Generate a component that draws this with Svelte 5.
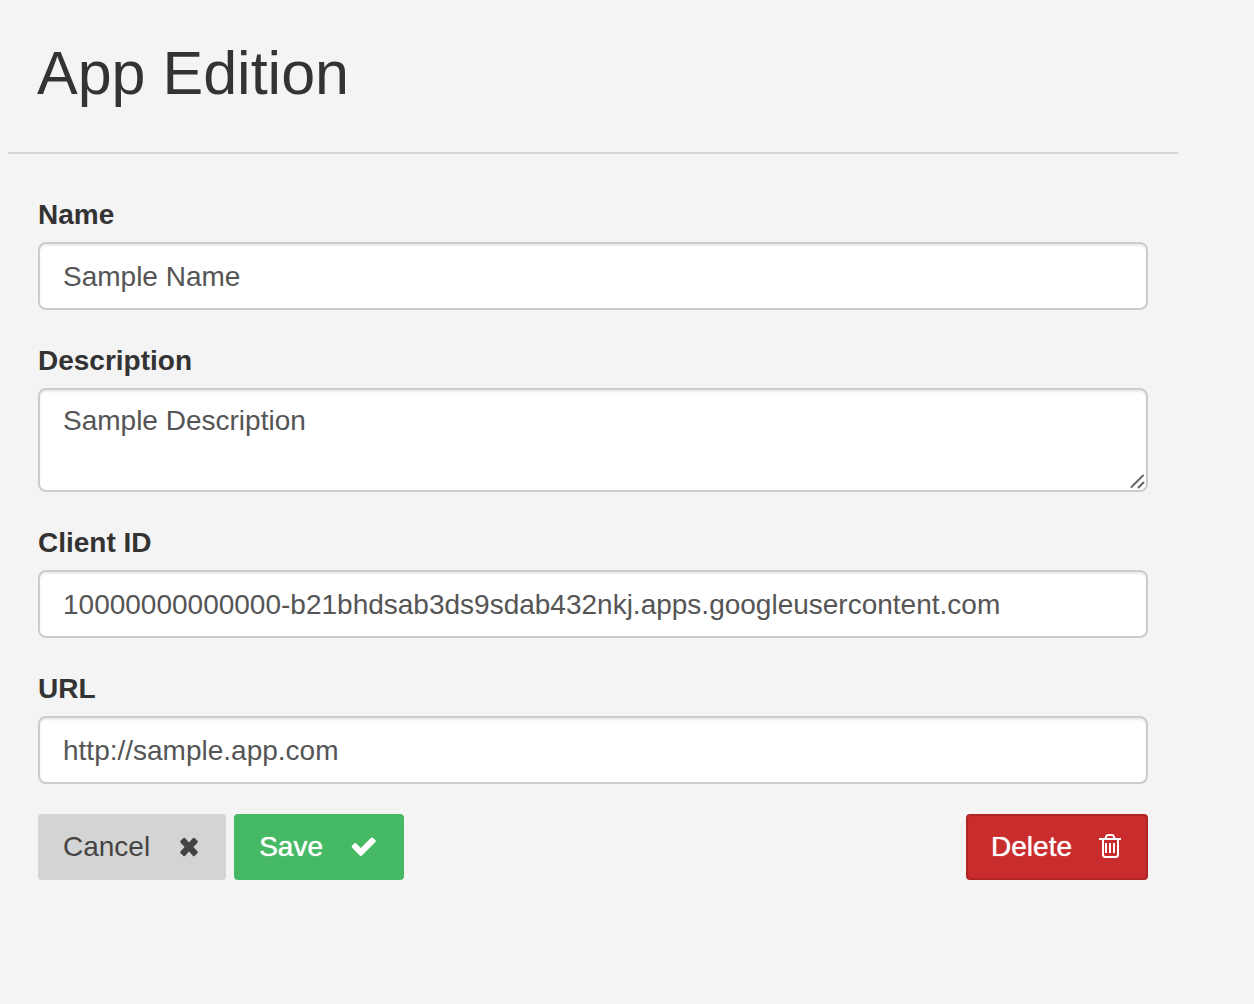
<script>
  let name = $state('Sample Name');
  let description = $state('Sample Description');
  let clientId = $state('10000000000000-b21bhdsab3ds9sdab432nkj.apps.googleusercontent.com');
  let url = $state('http://sample.app.com');
</script>

<main>
  <header>
    <h1>App Edition</h1>
  </header>
  <form onsubmit={(e) => e.preventDefault()}>
    <div class="field">
      <label for="name">Name</label>
      <input id="name" type="text" bind:value={name} />
    </div>
    <div class="field">
      <label for="description">Description</label>
      <div class="area">
        <textarea id="description" rows="2" bind:value={description}></textarea>
        <svg class="grip" viewBox="0 0 16 16" aria-hidden="true">
          <path d="M1.500 13 13 1.500M8.500 13.500l5-5" />
        </svg>
      </div>
    </div>
    <div class="field">
      <label for="client">Client ID</label>
      <input id="client" type="text" bind:value={clientId} />
    </div>
    <div class="field">
      <label for="url">URL</label>
      <input id="url" type="text" bind:value={url} />
    </div>
    <div class="actions">
      <button type="button" class="cancel">
        Cancel
        <svg width="22" height="20" viewBox="0 0 22 20" aria-hidden="true">
          <path
            d="M6.200 1.200Q7.200 .2 8.200 1.200L12 5.400 15.800 1.200Q16.800 .2 17.800 1.200L20.400 3.800Q21.400 4.800 20.400 5.800L16.400 10 20.400 14.200Q21.400 15.200 20.400 16.200L17.800 18.800Q16.800 19.800 15.800 18.800L12 14.600 8.200 18.800Q7.200 19.800 6.200 18.800L3.600 16.200Q2.600 15.200 3.600 14.200L7.600 10 3.600 5.800Q2.600 4.800 3.600 3.800Z"
            fill="currentColor"
          />
        </svg>
      </button>
      <button type="submit" class="save">
        Save
        <svg width="27" height="20" viewBox="0 0 27 20" aria-hidden="true">
          <path
            d="M2.200 8.600 4.200 6.600Q5.300 5.600 6.400 6.600L10.800 11 20.800.9Q21.900-.1 23 .9L25.300 3.100Q26.300 4.200 25.300 5.300L11.900 18.600Q10.800 19.600 9.700 18.600L2.200 10.800Q1.200 9.700 2.200 8.600Z"
            fill="currentColor"
          />
        </svg>
      </button>
      <button type="button" class="delete">
        Delete
        <svg width="22" height="26" viewBox="0 0 22 26" aria-hidden="true">
          <path
            d="M0 5H22M6.500 4.500 7.200 2.400Q7.700 1 9 1H13Q14.300 1 14.800 2.400L15.500 4.500M4 5V20.500Q4 23 6.500 23H16.500Q19 23 19 20.500V5"
            fill="none"
            stroke="currentColor"
            stroke-width="2"
          />
          <path d="M7 9V19M11 9V19M15 9V19" stroke="currentColor" stroke-width="2" />
        </svg>
      </button>
    </div>
  </form>
</main>

<style>
  :global(body) {
    margin: 0;
    background: #f4f4f4;
  }
  main {
    box-sizing: border-box;
    padding: 0 76px 0 8px;
    font-family: "Liberation Sans", Arial, sans-serif;
    font-size: 28px;
    line-height: 40px;
    color: #333;
  }
  header {
    padding: 39px 29px 45px;
    border-bottom: 2px solid #d5d5d5;
  }
  h1 {
    margin: 0;
    font-size: 61px;
    line-height: 68px;
    font-weight: 400;
  }
  form {
    padding: 40px 30px 0;
  }
  .field {
    margin-bottom: 30px;
  }
  label {
    display: block;
    margin-bottom: 6px;
    line-height: 42px;
    font-weight: 700;
  }
  input,
  textarea {
    display: block;
    box-sizing: border-box;
    width: 100%;
    height: 68px;
    margin: 0;
    padding: 13px 23px 11px;
    border: 2px solid #ccc;
    border-radius: 8px;
    outline: none;
    background: #fff;
    box-shadow: inset 0 2px 2px rgba(0, 0, 0, 0.075);
    font: inherit;
    color: #555;
  }
  textarea {
    height: 104px;
    padding: 11px 23px;
    resize: none;
  }
  .area {
    position: relative;
  }
  .grip {
    position: absolute;
    right: 2px;
    bottom: 2px;
    width: 16px;
    height: 16px;
    fill: none;
    stroke: #666;
    stroke-width: 2;
    stroke-linecap: round;
  }
  .actions {
    display: flex;
    gap: 8px;
  }
  button {
    display: flex;
    align-items: center;
    gap: 27px;
    height: 66px;
    padding: 0 25px 0 23px;
    border: 2px solid transparent;
    border-radius: 4px;
    font: inherit;
    cursor: pointer;
  }
  .cancel {
    border-color: #d4d4d4;
    background: #d4d4d4;
    color: #444;
  }
  .save {
    border-color: #45b964;
    background: #45b964;
    color: #fff;
    text-shadow: 0 0 1px #fff;
  }
  .delete {
    margin-left: auto;
    border-color: #b02626;
    background: #c92c2c;
    color: #fff;
    text-shadow: 0 0 1px #fff;
  }
</style>
